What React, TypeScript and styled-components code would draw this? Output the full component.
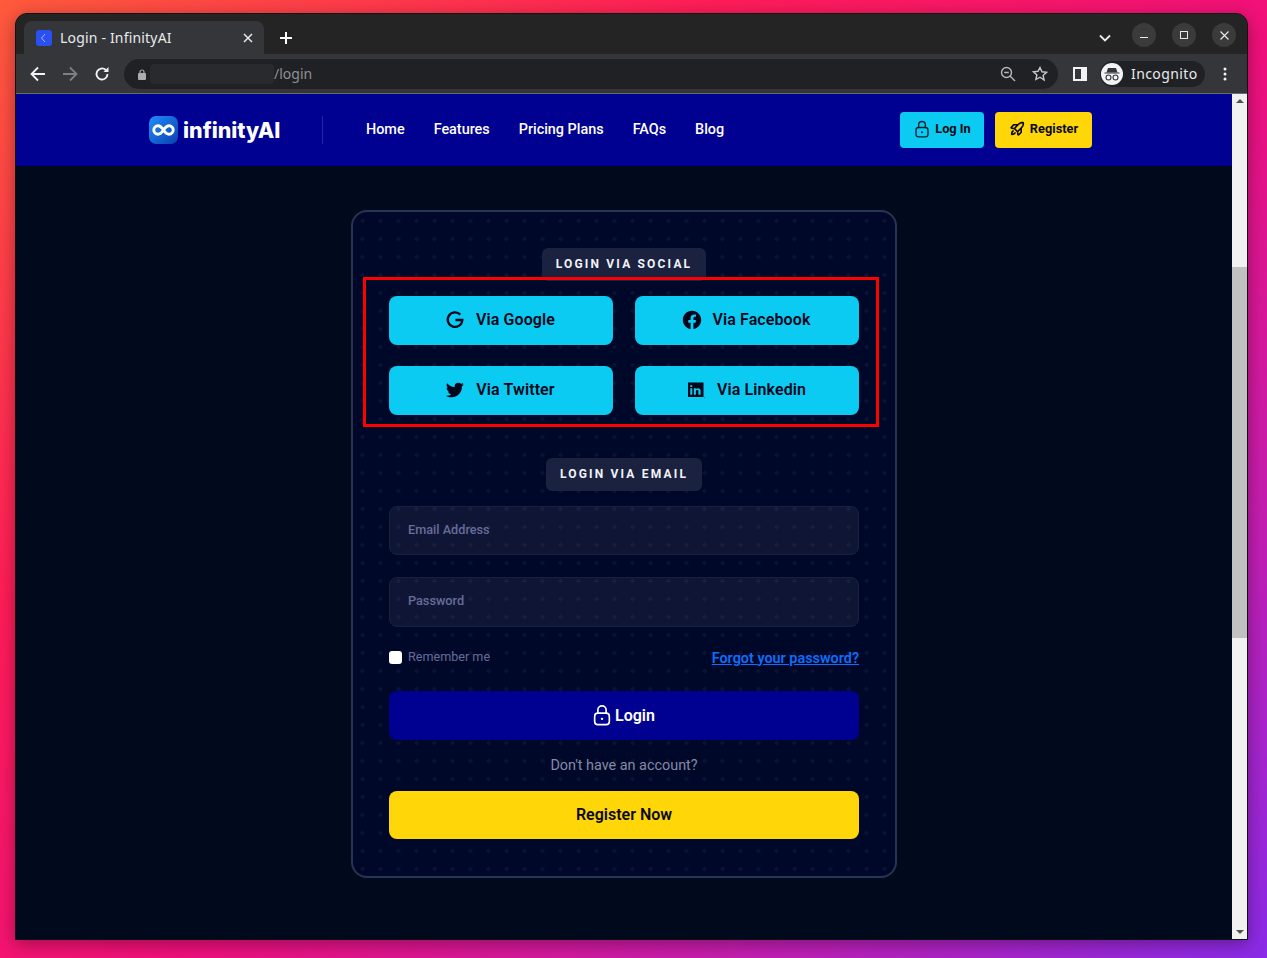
import React from "react";
import styled, { createGlobalStyle } from "styled-components";
import { BiLogoFacebookCircle, BiLogoTwitter } from "react-icons/bi";
import { PiRocketLaunchBold } from "react-icons/pi";

const Global = createGlobalStyle`
  html, body { margin: 0; padding: 0; height: 958px; overflow: hidden; }
  * { box-sizing: border-box; }
  body { font-family: Roboto, "Liberation Sans", sans-serif; }
`;

const Desktop = styled.div`
  width: 1267px;
  height: 958px;
  padding: 13px 19px 18px 15px;
  background: linear-gradient(140deg, #ff5a3c 0%, #ff1c58 30%, #f0107c 55%, #c41eb0 78%, #8a2be8 100%);
`;
const Win = styled.div`
  width: 1233px;
  height: 927px;
  display: flex;
  flex-direction: column;
  border-radius: 12px 12px 0 0;
  border: 1px solid #111;
  overflow: hidden;
  box-shadow: 0 4px 18px rgba(0, 0, 0, 0.35);
  background: #242424;
`;
const TitleBar = styled.div`
  height: 40px;
  flex: none;
  background: #242424;
  display: flex;
  align-items: flex-end;
  padding-left: 8px;
  color: #e8eaed;
`;
const Tab = styled.div`
  width: 240px;
  height: 33px;
  background: #35363a;
  border-radius: 8px 8px 0 0;
  display: flex;
  align-items: center;
  padding: 0 11px 0 12px;
  font-family: "Noto Sans", sans-serif;
  font-size: 14px;
  letter-spacing: 0.18px;
  color: #e8eaed;
`;
const Favicon = styled.span`
  width: 16px;
  height: 16px;
  border-radius: 3px;
  background: #2a50f0;
  margin-right: 8px;
  display: flex;
  align-items: center;
  justify-content: center;
  flex: none;
`;
const TabTitle = styled.span`
  flex: 1;
  white-space: nowrap;
`;
const NewTab = styled.span`
  width: 28px;
  height: 28px;
  margin: 0 0 2px 8px;
  display: flex;
  align-items: center;
  justify-content: center;
`;
const Spacer = styled.div`
  flex: 1;
`;
const WinControls = styled.div`
  display: flex;
  align-items: center;
  align-self: flex-start;
  gap: 16px;
  margin-top: 9px;
  padding-right: 11px;
`;
const Chevron = styled.span`
  width: 24px;
  height: 24px;
  display: flex;
  align-items: center;
  justify-content: center;
  margin-right: -1px;
  padding-top: 5px;
`;
const CircleBtn = styled.span`
  width: 24px;
  height: 24px;
  border-radius: 50%;
  background: #3b3b3b;
  display: flex;
  align-items: center;
  justify-content: center;
`;
const ToolBar = styled.div`
  height: 40px;
  flex: none;
  background: #35363a;
  border-bottom: 1px solid #6a6b70;
  display: flex;
  align-items: center;
  padding: 1px 0 0 0;
`;
const NavIcon = styled.span`
  width: 32px;
  display: flex;
  justify-content: center;
  flex: none;
`;
const NavIcons = styled.div`
  display: flex;
  padding-left: 6px;
  margin-right: 6px;
`;
const Omni = styled.div`
  width: 934px;
  height: 30px;
  border-radius: 15px;
  background: #202124;
  display: flex;
  align-items: center;
  padding-left: 14px;
  padding-right: 10px;
`;
const Redacted = styled.span`
  width: 124px;
  height: 20px;
  border-radius: 4px;
  background: #292a2d;
  margin-left: 4px;
`;
const UrlPath = styled.span`
  font-family: "Noto Sans", sans-serif;
  font-size: 14px;
  color: #8e9196;
  margin-top: -2px;
`;
const OmniIcons = styled.div`
  display: flex;
  gap: 16px;
  align-items: center;
`;
const SidePanel = styled.span`
  margin-left: 15px;
  display: flex;
`;
const Profile = styled.div`
  margin-left: 13px;
  width: 105px;
  height: 26px;
  border-radius: 13px;
  background: #202124;
  display: flex;
  align-items: center;
  padding-left: 1px;
  gap: 8px;
  font-family: "Noto Sans", sans-serif;
  font-size: 14px;
  letter-spacing: 0.4px;
  color: #e8eaed;
`;
const ProfileName = styled.span`
  margin-top: -2px;
`;
const Avatar = styled.span`
  width: 22px;
  height: 22px;
  border-radius: 50%;
  background: #f1f3f4;
  display: flex;
  align-items: center;
  justify-content: center;
  flex: none;
`;
const Kebab = styled.span`
  margin-left: 18px;
  display: flex;
`;
const Viewport = styled.div`
  flex: 1;
  display: flex;
  min-height: 0;
`;
const Page = styled.div`
  flex: 1;
  min-width: 0;
  background: #000a1c;
  overflow: hidden;
`;
const Scrollbar = styled.div`
  width: 15px;
  flex: none;
  background: #f1f1f1;
  display: flex;
  flex-direction: column;
  align-items: center;
  padding: 5px 0;
`;
const Thumb = styled.div`
  width: 100%;
  height: 371px;
  background: #c1c1c1;
  margin-top: 164px;
`;
const ArrowUp = styled.span`
  width: 0;
  height: 0;
  border-left: 4px solid transparent;
  border-right: 4px solid transparent;
  border-bottom: 4px solid #505050;
`;
const ArrowDown = styled.span`
  width: 0;
  height: 0;
  margin-top: auto;
  border-left: 4px solid transparent;
  border-right: 4px solid transparent;
  border-top: 4px solid #505050;
`;
const Nav = styled.nav`
  height: 72px;
  background: #000091;
  display: flex;
  align-items: center;
  padding: 0 140px 0 133px;
`;
const Logo = styled.div`
  display: flex;
  align-items: center;
  gap: 5px;
  font-family: Inter, sans-serif;
  font-weight: 800;
  font-size: 21.4px;
  color: #fff;
  width: 174px;
  height: 28px;
  border-right: 1px solid #1c2a9e;
`;
const NavLinks = styled.div`
  display: flex;
  gap: 29px;
  margin: -2px 0 0 43px;
  flex: 1;
`;
const NavLink = styled.a`
  font-size: 14.4px;
  font-weight: 500;
  color: #fff;
`;
const NavBtn = styled.a<{ $bg: string; $w: number }>`
  width: ${(p) => p.$w}px;
  height: 36px;
  padding-bottom: 3px;
  border-radius: 4px;
  background: ${(p) => p.$bg};
  margin-left: 11px;
  display: flex;
  align-items: center;
  justify-content: center;
  gap: 4px;
  font-size: 12.8px;
  font-weight: 700;
  color: #0a0a14;
`;
const Card = styled.section`
  width: 546px;
  margin: 44px 0 0 335px;
  padding: 36px 36px 37px;
  position: relative;
  border: 2px solid #2b3352;
  border-radius: 16px;
  background-color: #000829;
  background-image: radial-gradient(circle, #0b1233 1.6px, transparent 1.9px);
  background-size: 18px 18px;
  background-position: 0.5px 0px;
`;
const PillRow = styled.div<{ $mt?: number }>`
  display: flex;
  justify-content: center;
  margin: ${(p) => p.$mt ?? 0}px 0 15px;
`;
const Pill = styled.div`
  height: 33px;
  padding: 0 14px 2px;
  background: #1b2240;
  border-radius: 6px;
  display: flex;
  align-items: center;
  font-size: 12px;
  font-weight: 700;
  letter-spacing: 2.18px;
  color: #f2f3f8;
`;
const SocialGrid = styled.div`
  display: grid;
  grid-template-columns: 224px 224px;
  column-gap: 22px;
  row-gap: 21px;
`;
const SocialBtn = styled.a<{ $gap?: number }>`
  height: 49px;
  padding: 0 3px 2px 0;
  border-radius: 8px;
  background: #0ccbf2;
  display: flex;
  align-items: center;
  justify-content: center;
  gap: ${(p) => p.$gap ?? 10}px;
  font-size: 16px;
  font-weight: 600;
  letter-spacing: 0.1px;
  color: #00071a;
`;
const Highlight = styled.div`
  position: absolute;
  left: 10px;
  top: 65px;
  width: 516px;
  height: 150px;
  border: 3px solid #ff0000;
  pointer-events: none;
`;
const Fields = styled.div`
  display: flex;
  flex-direction: column;
  gap: 22px;
`;
const Field = styled.input<{ $h: number }>`
  width: 100%;
  height: ${(p) => p.$h}px;
  padding: 0 18px ${(p) => p.$h - 47}px;
  border: 1px solid #1a2140;
  border-radius: 8px;
  background: rgba(255, 255, 255, 0.06);
  font-family: Roboto, sans-serif;
  font-size: 12.7px;
  font-weight: 500;
  outline: none;
  &::placeholder {
    color: #676c9a;
    opacity: 1;
  }
`;
const OptionRow = styled.div`
  display: flex;
  align-items: center;
  justify-content: space-between;
  height: 64px;
`;
const Remember = styled.label`
  display: flex;
  align-items: center;
  gap: 6px;
  font-size: 12.6px;
  color: #676c9a;
  margin-top: -6px;
`;
const Check = styled.span`
  width: 13px;
  height: 13px;
  border-radius: 3px;
  background: #fff;
  margin-top: 2px;
`;
const Forgot = styled.a`
  font-size: 14.4px;
  font-weight: 600;
  color: #0d6efd;
  text-decoration: underline;
  margin-top: -2px;
`;
const BigBtn = styled.a<{ $bg: string; $fg: string; $h: number; $pr?: number }>`
  height: ${(p) => p.$h}px;
  padding: 0 ${(p) => p.$pr ?? 0}px 1px 0;
  border-radius: 8px;
  background: ${(p) => p.$bg};
  color: ${(p) => p.$fg};
  display: flex;
  align-items: center;
  justify-content: center;
  gap: 2px;
  font-size: 16px;
  font-weight: 600;
`;
const NoAccount = styled.p`
  margin: 0;
  height: 51px;
  display: flex;
  align-items: center;
  justify-content: center;
  font-size: 14.4px;
  color: #868aa5;
`;

const Lock = ({ size, color }: { size: number; color: string }) => (
  <svg width={size} height={size} viewBox="0 0 24 24" fill="none" stroke={color} strokeWidth="1.8">
    <rect x="4" y="10" width="16" height="12.500" rx="3.500" />
    <path d="M7.500 10V6.500a4.500 4.500 0 0 1 9 0V10" />
    <circle cx="12" cy="16.200" r="1.300" fill={color} stroke="none" />
  </svg>
);

const GoogleG = () => (
  <svg width="22" height="22" viewBox="0 0 22 22" fill="none" stroke="currentColor" strokeWidth="2.300">
    <path d="M16.300 5.600A7.300 7.300 0 1 0 18.300 11H11.500" />
  </svg>
);

const Linkedin = () => (
  <svg width="22" height="22" viewBox="0 0 22 22">
    <path
      fillRule="evenodd"
      fill="currentColor"
      d="M3 3.500h15.500v14.500H3zM5.300 6.200v1.800h2v-1.800zM5.300 9.300v6.500h2V9.300zM8.900 9.300v6.500h2v-3.600c0-1.500 2.500-1.700 2.500 0v3.600h2.200v-4c0-3-3.200-3.300-4.700-1.700V9.300z"
    />
    <circle cx="19.300" cy="18.300" r="0.400" fill="currentColor" />
  </svg>
);

const LogoMark = () => (
  <svg width="29" height="28" viewBox="0 0 29 28">
    <defs>
      <linearGradient id="lg" x1="0" y1="0" x2="1" y2="1">
        <stop offset="0" stopColor="#1f8dfb" />
        <stop offset="1" stopColor="#0a3fb0" />
      </linearGradient>
    </defs>
    <rect width="29" height="28" rx="7" fill="url(#lg)" />
    <path
      d="M14.500 14c-2-3-3.600-4.200-5.500-4.200a4.200 4.200 0 0 0 0 8.400c1.900 0 3.500-1.200 5.500-4.200c2-3 3.600-4.200 5.500-4.200a4.200 4.200 0 0 1 0 8.400c-1.900 0-3.500-1.200-5.500-4.200z"
      fill="none"
      stroke="#fff"
      strokeWidth="2.900"
    />
  </svg>
);

export default function App() {
  return (
    <>
      <Global />
      <Desktop>
        <Win>
          <TitleBar>
            <Tab>
              <Favicon>
                <svg width="10" height="10" viewBox="0 0 10 10" fill="none" stroke="#9fb6ff" strokeWidth="1">
                  <path d="M6 1 2.500 5 6 9" />
                </svg>
              </Favicon>
              <TabTitle>Login - InfinityAI</TabTitle>
              <svg width="10" height="10" viewBox="0 0 10 10" stroke="#e8eaed" strokeWidth="1.500">
                <path d="M1 1l8 8M9 1l-8 8" />
              </svg>
            </Tab>
            <NewTab>
              <svg width="12" height="12" viewBox="0 0 12 12" stroke="#fff" strokeWidth="2">
                <path d="M6 0v12M0 6h12" />
              </svg>
            </NewTab>
            <Spacer />
            <WinControls>
              <Chevron>
                <svg width="12" height="8" viewBox="0 0 12 8" fill="none" stroke="#e8eaed" strokeWidth="1.800">
                  <path d="M1 1.500 6 6.500 11 1.500" />
                </svg>
              </Chevron>
              <CircleBtn>
                <svg width="8" height="8" viewBox="0 0 8 8" stroke="#e8eaed" strokeWidth="1">
                  <path d="M0 6.500h8" />
                </svg>
              </CircleBtn>
              <CircleBtn>
                <svg width="8" height="8" viewBox="0 0 8 8" fill="none" stroke="#e8eaed" strokeWidth="1">
                  <rect x="0.500" y="0.500" width="7" height="7" />
                </svg>
              </CircleBtn>
              <CircleBtn>
                <svg width="9" height="9" viewBox="0 0 9 9" stroke="#e8eaed" strokeWidth="1.100">
                  <path d="M0.500 0.500l8 8M8.500 0.500l-8 8" />
                </svg>
              </CircleBtn>
            </WinControls>
          </TitleBar>
          <ToolBar>
            <NavIcons>
              <NavIcon>
                <svg width="16" height="16" viewBox="0 0 16 16" fill="none" stroke="#f1f3f4" strokeWidth="1.800">
                  <path d="M15 8H2M8 1.500 1.500 8 8 14.500" />
                </svg>
              </NavIcon>
              <NavIcon>
                <svg width="16" height="16" viewBox="0 0 16 16" fill="none" stroke="#7d7f83" strokeWidth="1.800">
                  <path d="M1 8h13M8 1.500 14.500 8 8 14.500" />
                </svg>
              </NavIcon>
              <NavIcon>
                <svg width="16" height="16" viewBox="0 0 16 16" fill="none" stroke="#f1f3f4" strokeWidth="1.800">
                  <path d="M13.500 8a5.500 5.500 0 1 1-1.700-4" />
                  <path d="M14.500 1v5h-5z" fill="#f1f3f4" stroke="none" />
                </svg>
              </NavIcon>
            </NavIcons>
            <Omni>
              <svg width="8" height="11" viewBox="0 0 8 11">
                <rect y="4" width="8" height="7" rx="1" fill="#a9abae" />
                <path d="M2 5V3a2 2 0 0 1 4 0v2" fill="none" stroke="#a9abae" strokeWidth="1.200" />
              </svg>
              <Redacted />
              <UrlPath>/login</UrlPath>
              <Spacer />
              <OmniIcons>
                <svg width="16" height="16" viewBox="0 0 16 16" fill="none" stroke="#b5b7ba" strokeWidth="1.400">
                  <circle cx="6.500" cy="6.500" r="5" />
                  <path d="M10 10l5 5M4.200 6.500h4.600" />
                </svg>
                <svg width="16" height="16" viewBox="0 0 16 16" fill="none" stroke="#c4c6c9" strokeWidth="1.400">
                  <path d="M8 1.500l1.950 4.300 4.650.5-3.500 3.100 1 4.600L8 11.200 3.900 13.500l1-4.600-3.500-3.100 4.650-.5z" />
                </svg>
              </OmniIcons>
            </Omni>
            <SidePanel>
              <svg width="14" height="14" viewBox="0 0 14 14">
                <rect width="14" height="14" fill="#f1f3f4" />
                <rect x="2" y="2" width="6" height="10" fill="#35363a" />
              </svg>
            </SidePanel>
            <Profile>
              <Avatar>
                <svg width="18" height="14" viewBox="0 0 18 14" fill="none">
                  <path d="M5 1h8l1.500 4.500h-11z" fill="#35363a" />
                  <path d="M1.500 6h15" stroke="#35363a" strokeWidth="1.200" />
                  <circle cx="5.500" cy="10.500" r="2.500" stroke="#35363a" strokeWidth="1.100" />
                  <circle cx="12.500" cy="10.500" r="2.500" stroke="#35363a" strokeWidth="1.100" />
                </svg>
              </Avatar>
              <ProfileName>Incognito</ProfileName>
            </Profile>
            <Kebab>
              <svg width="4" height="14" viewBox="0 0 4 14" fill="#f1f3f4">
                <circle cx="2" cy="2" r="1.500" />
                <circle cx="2" cy="7" r="1.500" />
                <circle cx="2" cy="12" r="1.500" />
              </svg>
            </Kebab>
          </ToolBar>
          <Viewport>
            <Page>
              <Nav>
                <Logo>
                  <LogoMark />
                  infinityAI
                </Logo>
                <NavLinks>
                  <NavLink>Home</NavLink>
                  <NavLink>Features</NavLink>
                  <NavLink>Pricing Plans</NavLink>
                  <NavLink>FAQs</NavLink>
                  <NavLink>Blog</NavLink>
                </NavLinks>
                <NavBtn $bg="#0ccbf2" $w={84}>
                  <Lock size={18} color="#06222e" />
                  Log In
                </NavBtn>
                <NavBtn $bg="#ffd607" $w={97}>
                  <PiRocketLaunchBold size={17} />
                  Register
                </NavBtn>
              </Nav>
              <Card>
                <Highlight />
                <PillRow>
                  <Pill>LOGIN VIA SOCIAL</Pill>
                </PillRow>
                <SocialGrid>
                  <SocialBtn>
                    <GoogleG />
                    Via Google
                  </SocialBtn>
                  <SocialBtn>
                    <BiLogoFacebookCircle size={22} />
                    Via Facebook
                  </SocialBtn>
                  <SocialBtn>
                    <BiLogoTwitter size={22} />
                    Via Twitter
                  </SocialBtn>
                  <SocialBtn $gap={10}>
                    <Linkedin />
                    Via Linkedin
                  </SocialBtn>
                </SocialGrid>
                <PillRow $mt={43}>
                  <Pill>LOGIN VIA EMAIL</Pill>
                </PillRow>
                <Fields>
                  <Field $h={49} placeholder="Email Address" />
                  <Field $h={50} placeholder="Password" />
                </Fields>
                <OptionRow>
                  <Remember>
                    <Check />
                    Remember me
                  </Remember>
                  <Forgot>Forgot your password?</Forgot>
                </OptionRow>
                <BigBtn $bg="#000091" $fg="#fff" $h={49} $pr={2}>
                  <Lock size={22} color="#fff" />
                  Login
                </BigBtn>
                <NoAccount>Don't have an account?</NoAccount>
                <BigBtn $bg="#ffd607" $fg="#0a0a14" $h={48}>
                  Register Now
                </BigBtn>
              </Card>
            </Page>
            <Scrollbar>
              <ArrowUp />
              <Thumb />
              <ArrowDown />
            </Scrollbar>
          </Viewport>
        </Win>
      </Desktop>
    </>
  );
}
